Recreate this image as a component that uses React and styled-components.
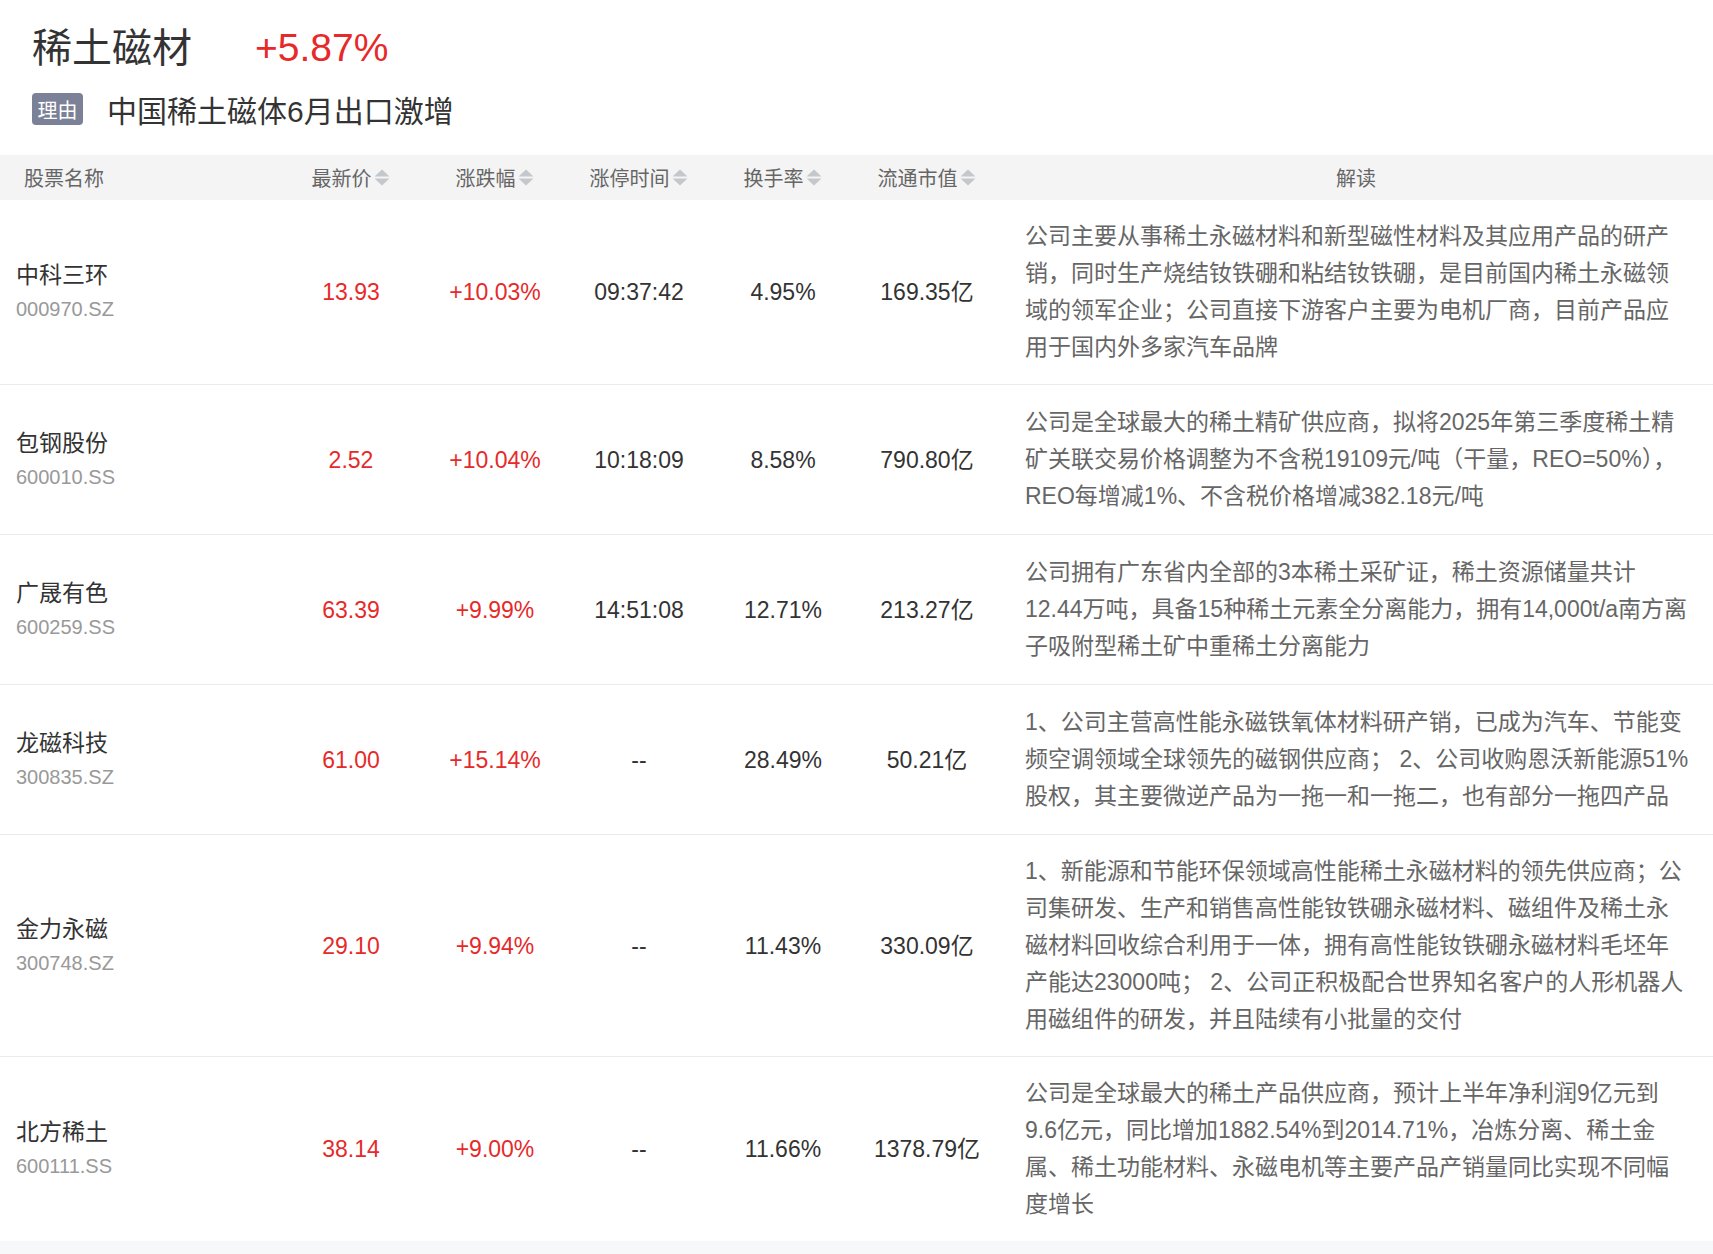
import React from 'react';
import styled, { createGlobalStyle } from 'styled-components';

const GlobalStyle = createGlobalStyle`
  html, body {
    margin: 0;
    padding: 0;
    background: #ffffff;
  }
  body {
    font-family: "Liberation Sans", Arial, "Noto Sans CJK SC", sans-serif;
    color: #333333;
  }
`;

const RED = '#e62a2a';

const Page = styled.div`
  width: 1713px;
  min-height: 1254px;
  background: #f7f8fa;
`;

const Top = styled.div`
  background: #ffffff;
  padding: 24px 32px 30px;
`;

const TitleRow = styled.div`
  display: flex;
  align-items: center;
  height: 48px;
`;

const Title = styled.h1`
  margin: 0;
  font-size: 40px;
  font-weight: normal;
  color: #333333;
  line-height: 48px;
`;

const Change = styled.span`
  margin-left: 63px;
  font-size: 39px;
  color: ${RED};
  line-height: 48px;
`;

const ReasonRow = styled.div`
  display: flex;
  align-items: center;
  margin-top: 21px;
  height: 32px;
`;

const Badge = styled.span`
  display: inline-flex;
  align-items: center;
  justify-content: center;
  width: 51px;
  height: 32px;
  border-radius: 4px;
  background: #7b8196;
  color: #ffffff;
  font-size: 20px;
`;

const Reason = styled.span`
  margin-left: 24px;
  font-size: 30px;
  color: #333333;
`;

const Grid = styled.div`
  display: grid;
  grid-template-columns: 279px repeat(5, 144px) 1fr;
  align-items: center;
`;

const HeadRow = styled(Grid)`
  height: 45px;
  background: #f4f4f4;
  color: #666666;
  font-size: 20px;
`;

const HeadCell = styled.div`
  display: flex;
  align-items: center;
  justify-content: ${({ $left }) => ($left ? 'flex-start' : 'center')};
  padding-left: ${({ $left }) => ($left ? '24px' : '0')};
`;

const SortIcon = styled.svg`
  width: 18px;
  height: 19px;
  margin-left: 1px;
`;

const Row = styled(Grid)`
  background: #ffffff;
  min-height: 149px;
  border-bottom: 1px solid #ebebeb;
  &:last-child {
    border-bottom: none;
  }
`;

const NameCell = styled.div`
  padding-left: 16px;
  display: flex;
  flex-direction: column;
`;

const Name = styled.span`
  font-size: 23px;
  line-height: 34px;
  color: #333333;
`;

const Code = styled.span`
  font-size: 20px;
  line-height: 34px;
  color: #999999;
`;

const Value = styled.div`
  text-align: center;
  font-size: 23px;
  line-height: 28px;
  height: 28px;
  color: ${({ $red }) => ($red ? RED : '#333333')};
`;

const Desc = styled.div`
  padding: 18px 24px 18px 26px;
  font-size: 23px;
  line-height: 37px;
  color: #666666;
`;

const Sort = () => (
  <SortIcon viewBox='0 0 18 19'>
    <path d='M9 1.5 L16.5 8.5 L1.5 8.5 Z' fill='#c4c7cc' />
    <path d='M1.5 10.5 L16.5 10.5 L9 17.5 Z' fill='#c4c7cc' />
  </SortIcon>
);

const stocks = [
  {
    name: '中科三环', code: '000970.SZ', price: '13.93', pct: '+10.03%', time: '09:37:42', turnover: '4.95%', cap: '169.35亿',
    desc: '公司主要从事稀土永磁材料和新型磁性材料及其应用产品的研产销，同时生产烧结钕铁硼和粘结钕铁硼，是目前国内稀土永磁领域的领军企业；公司直接下游客户主要为电机厂商，目前产品应用于国内外多家汽车品牌',
  },
  {
    name: '包钢股份', code: '600010.SS', price: '2.52', pct: '+10.04%', time: '10:18:09', turnover: '8.58%', cap: '790.80亿',
    desc: '公司是全球最大的稀土精矿供应商，拟将2025年第三季度稀土精矿关联交易价格调整为不含税19109元/吨（干量，REO=50%），REO每增减1%、不含税价格增减382.18元/吨',
  },
  {
    name: '广晟有色', code: '600259.SS', price: '63.39', pct: '+9.99%', time: '14:51:08', turnover: '12.71%', cap: '213.27亿',
    desc: '公司拥有广东省内全部的3本稀土采矿证，稀土资源储量共计12.44万吨，具备15种稀土元素全分离能力，拥有14,000t/a南方离子吸附型稀土矿中重稀土分离能力',
  },
  {
    name: '龙磁科技', code: '300835.SZ', price: '61.00', pct: '+15.14%', time: '--', turnover: '28.49%', cap: '50.21亿',
    desc: '1、公司主营高性能永磁铁氧体材料研产销，已成为汽车、节能变频空调领域全球领先的磁钢供应商； 2、公司收购恩沃新能源51%股权，其主要微逆产品为一拖一和一拖二，也有部分一拖四产品',
  },
  {
    name: '金力永磁', code: '300748.SZ', price: '29.10', pct: '+9.94%', time: '--', turnover: '11.43%', cap: '330.09亿',
    desc: '1、新能源和节能环保领域高性能稀土永磁材料的领先供应商；公司集研发、生产和销售高性能钕铁硼永磁材料、磁组件及稀土永磁材料回收综合利用于一体，拥有高性能钕铁硼永磁材料毛坯年产能达23000吨； 2、公司正积极配合世界知名客户的人形机器人用磁组件的研发，并且陆续有小批量的交付',
  },
  {
    name: '北方稀土', code: '600111.SS', price: '38.14', pct: '+9.00%', time: '--', turnover: '11.66%', cap: '1378.79亿',
    desc: '公司是全球最大的稀土产品供应商，预计上半年净利润9亿元到9.6亿元，同比增加1882.54%到2014.71%，冶炼分离、稀土金属、稀土功能材料、永磁电机等主要产品产销量同比实现不同幅度增长',
  },
];

const columns = ['最新价', '涨跌幅', '涨停时间', '换手率', '流通市值'];

export default function App() {
  return (
    <Page>
      <GlobalStyle />
      <Top>
        <TitleRow>
          <Title>稀土磁材</Title>
          <Change>+5.87%</Change>
        </TitleRow>
        <ReasonRow>
          <Badge>理由</Badge>
          <Reason>中国稀土磁体6月出口激增</Reason>
        </ReasonRow>
      </Top>
      <HeadRow>
        <HeadCell $left>股票名称</HeadCell>
        {columns.map((c) => (
          <HeadCell key={c}>{c}<Sort /></HeadCell>
        ))}
        <HeadCell>解读</HeadCell>
      </HeadRow>
      <div>
        {stocks.map((s) => (
          <Row key={s.code}>
            <NameCell>
              <Name>{s.name}</Name>
              <Code>{s.code}</Code>
            </NameCell>
            <Value $red>{s.price}</Value>
            <Value $red>{s.pct}</Value>
            <Value>{s.time}</Value>
            <Value>{s.turnover}</Value>
            <Value>{s.cap}</Value>
            <Desc>{s.desc}</Desc>
          </Row>
        ))}
      </div>
    </Page>
  );
}
